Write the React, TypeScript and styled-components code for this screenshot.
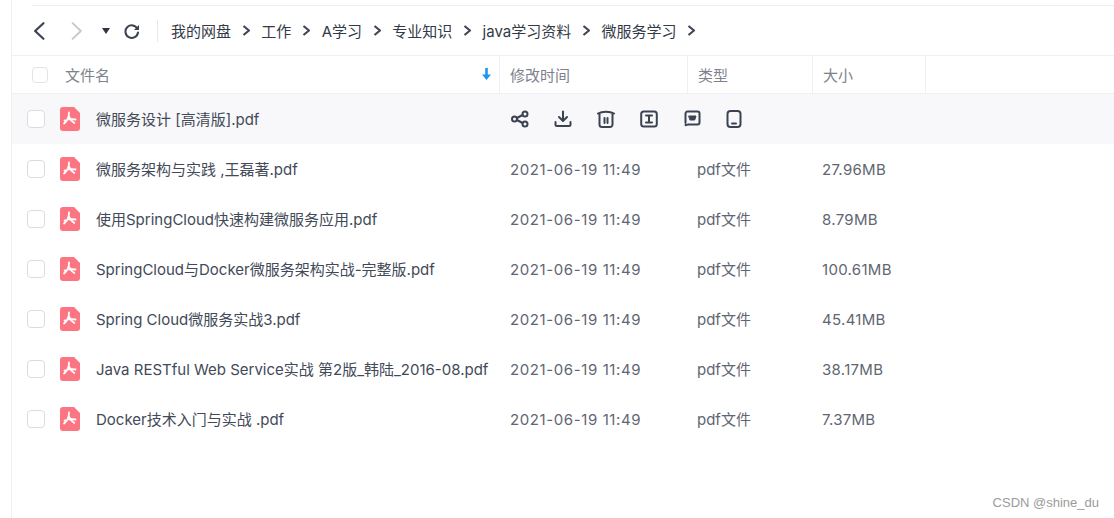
import React from "react";
import styled, { createGlobalStyle } from "styled-components";

const Global = createGlobalStyle`
  html, body { margin: 0; padding: 0; background: #fff; }
  body {
    font-family: Inter, "Noto Sans CJK SC", sans-serif;
    color: #424e67;
  }
`;

const Page = styled.div`
  display: flex;
  width: 1114px;
  height: 518px;
  overflow: hidden;
  position: relative;
`;

const Rail = styled.div`
  width: 11px;
  flex: none;
  border-right: 1px solid #f0f0f2;
`;

const Main = styled.div`
  flex: 1;
  min-width: 0;
  display: flex;
  flex-direction: column;
`;

const TopEdge = styled.div`
  height: 5px;
  margin-left: 20px;
  border-bottom: 1px solid #eeeef0;
`;

const Toolbar = styled.div`
  display: flex;
  align-items: center;
  height: 49px;
  padding-left: 18px;
  border-bottom: 1px solid #f0f0f2;
`;

const NavButton = styled.span<{ $ml?: number; $faded?: boolean }>`
  display: flex;
  align-items: center;
  justify-content: center;
  width: 18px;
  margin-left: ${(p) => p.$ml ?? 0}px;
  color: ${(p) => (p.$faded ? "#c4c7cf" : "#3b4352")};
`;

const Divider = styled.span`
  width: 1px;
  height: 22px;
  background: #e8e8ea;
  margin: 0 13px 0 16px;
`;

const Crumb = styled.span`
  font-size: 15px;
  color: #333a47;
`;

const Sep = styled.span`
  display: flex;
  width: 30.3px;
  justify-content: center;
  color: #3f4756;
`;

const HeaderRow = styled.div`
  display: flex;
  height: 37px;
  border-bottom: 1px solid #f0f0f2;
`;

const NameHead = styled.div`
  position: relative;
  display: flex;
  align-items: center;
  width: 488px;
  box-sizing: border-box;
  padding-left: 20px;
  border-right: 1px solid #f0f0f2;
  font-size: 15px;
  color: #7e828c;
`;

const HeadCell = styled.div<{ $w: number }>`
  display: flex;
  align-items: center;
  box-sizing: border-box;
  width: ${(p) => p.$w}px;
  padding-left: 10px;
  border-right: 1px solid #f0f0f2;
  font-size: 15px;
  color: #7e828c;
`;

const HeadBox = styled.span`
  width: 14px;
  height: 14px;
  border: 1.5px solid #e3e4e8;
  border-radius: 4px;
  margin-right: 17px;
`;

const SortArrow = styled.svg`
  position: absolute;
  right: 8px;
  top: 12px;
`;

const Row = styled.div<{ $hover?: boolean }>`
  display: flex;
  align-items: center;
  height: 50px;
  background: ${(p) => (p.$hover ? "#f8f8fa" : "#fff")};
  font-size: 15px;
`;

const RowBox = styled.span`
  flex: none;
  width: 16px;
  height: 16px;
  margin-left: 15px;
  border: 1.5px solid #d9dde3;
  border-radius: 4px;
  background: #fff;
`;

const FileIcon = styled.svg`
  flex: none;
  margin-left: 15px;
  margin-right: 16px;
`;

const FileName = styled.span`
  width: 414px;
  flex: none;
  padding-bottom: 2px;
  white-space: nowrap;
  color: #424a58;
`;

const Cell = styled.span<{ $w: number; $spacing?: number; $lift?: boolean }>`
  width: ${(p) => p.$w}px;
  flex: none;
  padding-bottom: ${(p) => (p.$lift ? 2 : 0)}px;
  letter-spacing: ${(p) => p.$spacing ?? 0}px;
  color: #5f6672;
  white-space: nowrap;
`;

const Actions = styled.div`
  display: flex;
  gap: 25px;
  margin-left: 1px;
  color: #3b4352;
`;

const Mark = styled.div`
  position: absolute;
  right: 15px;
  bottom: 8px;
  font-family: "Liberation Sans", sans-serif;
  font-size: 13px;
  color: #9b9b9b;
`;

const Pdf = () => (
  <FileIcon width="20" height="24" viewBox="0 0 20 24">
    <path d="M3 0h11l6 6v15a3 3 0 0 1-3 3H3a3 3 0 0 1-3-3V3a3 3 0 0 1 3-3z" fill="#fb7583" />
    <path
      d="M9 5.500c.1 3-.5 5.500-1.800 7.500-.8 1.300-1.900 2.400-3.200 3.500M4.500 13.500c3.500-1.500 7.500-1.800 11-1M9.300 10c.8 2.300 2.500 4.400 5 6"
      fill="none"
      stroke="#fff"
      strokeWidth="1.800"
      strokeLinecap="round"
    />
  </FileIcon>
);

const Chevron = ({ dir, width }: { dir: "l" | "r"; width: number }) => (
  <svg width="14" height="20" viewBox="0 0 12 18" fill="none">
    <path
      d={dir === "l" ? "M10 2L2.500 9l7.500 7" : "M2 2l7.500 7L2 16"}
      stroke="currentColor"
      strokeWidth={width}
      strokeLinecap="round"
      strokeLinejoin="round"
    />
  </svg>
);

const SmallSep = () => (
  <Sep>
    <svg width="9" height="11" viewBox="0 0 9 11" fill="none">
      <path d="M1.500 1L7 5.500 1.500 10" stroke="currentColor" strokeWidth="2.200" strokeLinejoin="round" />
    </svg>
  </Sep>
);

const A = ({ children, w = 18 }: { children: React.ReactNode; w?: number }) => (
  <svg width={w} height="18" viewBox={`0 0 ${w} 18`} fill="none" stroke="currentColor" strokeWidth="2" strokeLinecap="round" strokeLinejoin="round">
    {children}
  </svg>
);

const crumbs = ["我的网盘", "工作", "A学习", "专业知识", "java学习资料", "微服务学习"];

const files = [
  { name: "微服务架构与实践 ,王磊著.pdf", size: "27.96MB" },
  { name: "使用SpringCloud快速构建微服务应用.pdf", size: "8.79MB" },
  { name: "SpringCloud与Docker微服务架构实战-完整版.pdf", size: "100.61MB" },
  { name: "Spring Cloud微服务实战3.pdf", size: "45.41MB" },
  { name: "Java RESTful Web Service实战 第2版_韩陆_2016-08.pdf", size: "38.17MB" },
  { name: "Docker技术入门与实战 .pdf", size: "7.37MB" },
];

export default function App() {
  return (
    <Page>
      <Global />
      <Rail />
      <Main>
        <TopEdge />
        <Toolbar>
          <NavButton>
            <Chevron dir="l" width={2} />
          </NavButton>
          <NavButton $ml={20} $faded>
            <Chevron dir="r" width={1.6} />
          </NavButton>
          <NavButton $ml={11}>
            <svg width="8" height="6" viewBox="0 0 8 6">
              <path d="M0 0h8L4 6z" fill="#2f3643" />
            </svg>
          </NavButton>
          <NavButton $ml={8}>
            <svg width="16" height="16" viewBox="0 0 16 16" fill="none">
              <path d="M13.500 6A6.300 6.300 0 1 0 14 9.500" stroke="currentColor" strokeWidth="2" strokeLinecap="round" />
              <path d="M15 2v5h-5z" fill="currentColor" />
            </svg>
          </NavButton>
          <Divider />
          {crumbs.map((c) => (
            <React.Fragment key={c}>
              <Crumb>{c}</Crumb>
              <SmallSep />
            </React.Fragment>
          ))}
        </Toolbar>
        <HeaderRow>
          <NameHead>
            <HeadBox />
            文件名
            <SortArrow width="9" height="12" viewBox="0 0 9 12">
              <path d="M3.200 0h2.600v6.500H9L4.500 12 0 6.500h3.200z" fill="#1e96f0" />
            </SortArrow>
          </NameHead>
          <HeadCell $w={188}>修改时间</HeadCell>
          <HeadCell $w={125}>类型</HeadCell>
          <HeadCell $w={113}>大小</HeadCell>
        </HeaderRow>
        <Row $hover>
          <RowBox />
          <Pdf />
          <FileName>微服务设计 [高清版].pdf</FileName>
          <Actions>
            <A>
              <circle cx="3.500" cy="9" r="2.500" />
              <circle cx="14" cy="4" r="2.500" />
              <circle cx="14" cy="14" r="2.500" />
              <path d="M6 8l5.500-3M6 10l5.500 3" />
            </A>
            <A>
              <path d="M9 1.500v9M5 7l4 4 4-4" />
              <path d="M1.500 12v2.500a1.500 1.500 0 0 0 1.500 1.500h12a1.500 1.500 0 0 0 1.500-1.500V12" />
            </A>
            <A>
              <path d="M1 3.500c4-2.500 12-2.500 16 0" />
              <path d="M2.500 4v10.500a2.500 2.500 0 0 0 2.500 2.500h8a2.500 2.500 0 0 0 2.500-2.500V4" />
              <path d="M7.500 8v5M10.500 8v5" />
            </A>
            <A>
              <rect x="1.200" y="1.500" width="15.600" height="15" rx="2.500" />
              <path d="M6 5.500h6M6 12.500h6M9 5.500v7" />
            </A>
            <A>
              <path d="M2.500 12V3.500a2 2 0 0 1 2-2h10a2 2 0 0 1 2 2v9a2 2 0 0 1-2 2H5" />
              <path d="M2.500 12v3.500L5 14.500" strokeWidth="1.500" />
              <path d="M6 6h7l-1.300 4H7.300z" fill="currentColor" strokeWidth="1" />
            </A>
            <A w={16}>
              <rect x="1.500" y="1" width="13" height="16" rx="3" />
              <path d="M6 13.500h4" />
            </A>
          </Actions>
        </Row>
        {files.map((f) => (
          <Row key={f.name}>
            <RowBox />
            <Pdf />
            <FileName>{f.name}</FileName>
            <Cell $w={187} $spacing={0.6}>2021-06-19 11:49</Cell>
            <Cell $w={125} $lift>pdf文件</Cell>
            <Cell $w={100} $spacing={0.3}>{f.size}</Cell>
          </Row>
        ))}
      </Main>
      <Mark>CSDN @shine_du</Mark>
    </Page>
  );
}
